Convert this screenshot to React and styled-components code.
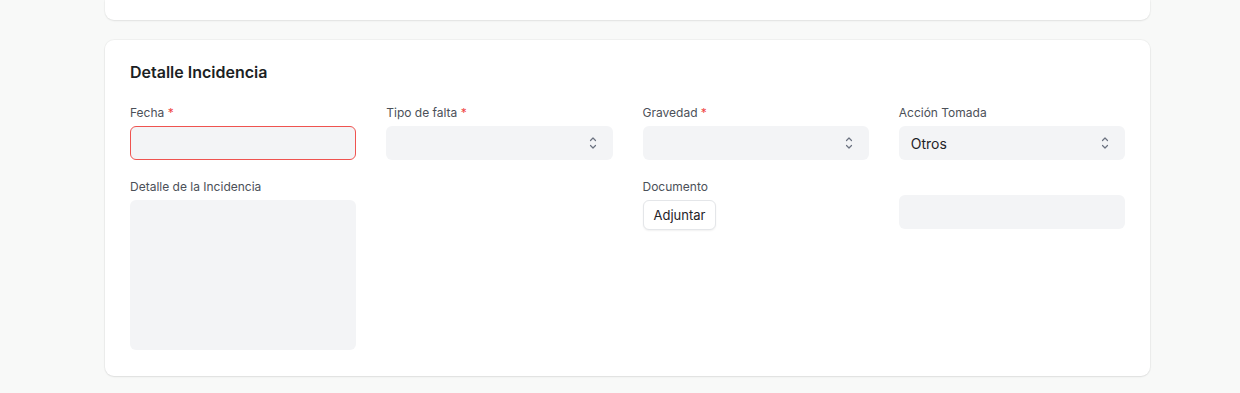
import React from 'react'
import styled, { createGlobalStyle } from 'styled-components'

const GlobalStyle = createGlobalStyle`
  body {
    margin: 0;
    background: #f8f9f8;
    font-family: Inter, "Noto Sans", sans-serif;
  }
`

export default function App() {
  return (
    <Page>
      <GlobalStyle />
      <TopCard />
      <Card>
        <Title>Detalle Incidencia</Title>
        <Grid>
          <Field>
            <Label>Fecha <Req>*</Req></Label>
            <Input $error />
          </Field>
          <Field>
            <Label>Tipo de falta <Req>*</Req></Label>
            <Select><Chevrons /></Select>
          </Field>
          <Field>
            <Label>Gravedad <Req>*</Req></Label>
            <Select><Chevrons /></Select>
          </Field>
          <Field>
            <Label>Acción Tomada</Label>
            <Select><Value>Otros</Value><Chevrons /></Select>
          </Field>

          <Field>
            <Label>Detalle de la Incidencia</Label>
            <TextArea />
          </Field>
          <Field />
          <Field>
            <Label>Documento</Label>
            <Button>Adjuntar</Button>
          </Field>
          <Field $offset>
            <Input />
          </Field>
        </Grid>
      </Card>
    </Page>
  )
}

function Chevrons() {
  return (
    <svg width="8" height="14" viewBox="0 0 8 14" fill="none" stroke="#6b7280" strokeWidth="1.2" strokeLinecap="round" strokeLinejoin="round">
      <path d="M1.5 4.5 L4 2 L6.5 4.5" />
      <path d="M1.5 9.5 L4 12 L6.5 9.5" />
    </svg>
  )
}

const Page = styled.div`
  display: flex;
  flex-direction: column;
  gap: 20px;
  padding: 0 90px 17px 105px;
`

const TopCard = styled.div`
  height: 20px;
  background: #fff;
  border-radius: 0 0 9px 9px;
  box-shadow: 0 1px 2px rgba(0, 0, 0, 0.08), 0 0 0 1px rgba(0, 0, 0, 0.02);
`

const Card = styled.section`
  background: #fff;
  border-radius: 9px;
  box-shadow: 0 1px 2px rgba(0, 0, 0, 0.08), 0 0 0 1px rgba(0, 0, 0, 0.03);
  padding: 20px 25px 26px;
`

const Title = styled.h2`
  margin: 0 0 21px;
  font-size: 16px;
  line-height: 24px;
  font-weight: 600;
  color: #1c1f24;
`

const Grid = styled.div`
  display: grid;
  grid-template-columns: repeat(4, 1fr);
  column-gap: 30px;
  row-gap: 19px;
`

const Field = styled.div`
  display: flex;
  flex-direction: column;
  gap: 6px;
  padding-top: ${p => (p.$offset ? '16px' : '0')};
`

const Label = styled.label`
  font-size: 12px;
  line-height: 15px;
  color: #4b5058;
`

const Req = styled.span`
  color: #ef4444;
`

const Input = styled.div`
  height: 34px;
  box-sizing: border-box;
  background: #f3f4f6;
  border-radius: 6px;
  border: 1px solid ${p => (p.$error ? '#ef5350' : 'transparent')};
`

const Select = styled.div`
  height: 34px;
  box-sizing: border-box;
  background: #f3f4f6;
  border-radius: 6px;
  display: flex;
  align-items: center;
  justify-content: space-between;
  padding: 0 16px 0 12px;

  svg {
    margin-left: auto;
  }
`

const Value = styled.span`
  font-size: 14px;
  color: #1f2328;
`

const TextArea = styled.div`
  height: 150px;
  background: #f3f4f6;
  border-radius: 6px;
`

const Button = styled.button`
  align-self: flex-start;
  height: 30px;
  padding: 0 10px;
  background: #fff;
  border: 1px solid #e4e6e9;
  border-radius: 6px;
  box-shadow: 0 1px 2px rgba(0, 0, 0, 0.06);
  font-family: Inter, "Noto Sans", sans-serif;
  font-size: 13px;
  color: #1f2328;
`
